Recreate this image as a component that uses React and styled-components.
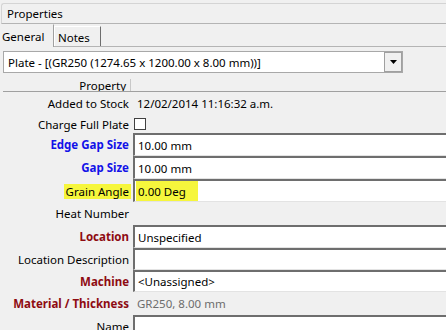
import React from "react";
import styled, { createGlobalStyle } from "styled-components";

const Global = createGlobalStyle`
  html, body { margin: 0; padding: 0; background: #f0f0f0; }
  body { font-family: "Noto Sans", "Liberation Sans", sans-serif; font-size: 11.5px; color: #000; }
`;

const Panel = styled.div`
  width: 446px;
  height: 330px;
  overflow: hidden;
  background: #f0f0f0;
  display: flex;
  flex-direction: column;
  & > * { flex-shrink: 0; }
`;

const TitleBar = styled.div`
  height: 21px;
  margin: 3px 0 0 1px;
  border: 1px solid #d4d4d4;
  border-right: none;
  border-bottom-color: #b4b4b4;
  border-radius: 3px 0 0 0;
  display: flex;
  align-items: center;
  padding-left: 5px;
  box-sizing: border-box;
`;

const TabStrip = styled.div`
  height: 23px;
  display: flex;
  align-items: flex-end;
  border-bottom: 1px solid #b4b4b4;
  box-sizing: border-box;
`;

const Tab = styled.div`
  height: ${(p) => (p.$active ? 23 : 20)}px;
  width: ${(p) => p.$w}px;
  box-sizing: border-box;
  display: flex;
  align-items: center;
  padding-left: ${(p) => (p.$active ? 1 : 3)}px;
  padding-top: ${(p) => (p.$active ? 0 : 1)}px;
  background: #f0f0f0;
  border-left: 1px solid ${(p) => (p.$active ? "transparent" : "#ffffff")};
  border-right: 1px solid ${(p) => (p.$active ? "#a0a0a0" : "#6d6d6d")};
  border-top: 1px solid ${(p) => (p.$active ? "transparent" : "#ffffff")};
  margin-bottom: ${(p) => (p.$active ? -1 : 0)}px;
`;

const ComboWrap = styled.div`
  padding: 4px 0 0 3px;
  height: 29px;
  box-sizing: border-box;
`;

const Combo = styled.div`
  width: 400px;
  height: 22px;
  box-sizing: border-box;
  border: 1px solid #a8a8a8;
  background: #fff;
  display: flex;
  align-items: center;
  padding-left: 4px;
`;

const ComboText = styled.span`
  flex: 1;
  white-space: nowrap;
`;

const ComboButton = styled.div`
  width: 18px;
  height: 20px;
  box-sizing: border-box;
  border: 1px solid #a0a0a0;
  background: #f0f0f0;
  display: flex;
  align-items: center;
  justify-content: center;
`;

const Grid = styled.div`
  margin-left: 3px;
  display: flex;
  flex-direction: column;
  & > * { flex-shrink: 0; }
`;

const HeaderRow = styled.div`
  height: 15px;
  display: grid;
  grid-template-columns: 128px 1fr;
  border-bottom: 1px solid #a0a0a0;
  overflow: hidden;
`;

const HeaderCell = styled.div`
  border-right: 1px solid #c8c8c8;
  text-align: right;
  padding-right: 4px;
  margin-top: 3px;
  line-height: 13px;
  white-space: nowrap;
`;

const Row = styled.div`
  height: ${(p) => p.$h}px;
  display: grid;
  grid-template-columns: 128px 1fr;
  align-items: center;
`;

const Label = styled.div`
  text-align: right;
  padding-right: 2px;
  white-space: nowrap;
  font-weight: ${(p) => (p.$tone === "blue" || p.$tone === "red" ? 700 : 400)};
  color: ${(p) =>
    p.$tone === "blue" ? "#1212e8" : p.$tone === "red" ? "#8e0b12" : "#000"};
  justify-self: end;
  background: ${(p) => (p.$hi ? "#f6f63c" : "transparent")};
  padding-left: ${(p) => (p.$hi ? 2 : 0)}px;
  line-height: 15px;
  margin-top: ${(p) => (p.$hi ? 2 : 0)}px;
`;

const Value = styled.div`
  padding-left: 6px;
  white-space: nowrap;
  color: ${(p) => (p.$muted ? "#6d6d6d" : "#000")};
`;

const Input = styled.div`
  height: 100%;
  margin-left: 2px;
  box-sizing: border-box;
  background: #fff;
  border-top: 2px solid #6e6e6e;
  border-left: 2px solid #6e6e6e;
  border-bottom: 1px solid #e3e3e3;
  display: flex;
  align-items: stretch;
  padding-left: 1px;
  white-space: nowrap;
`;

const InputText = styled.span`
  display: flex;
  align-items: center;
  padding-left: 2px;
  padding-right: ${(p) => (p.$hi ? 12 : 0)}px;
  background: ${(p) => (p.$hi ? "#f6f63c" : "transparent")};
`;

const Check = styled.div`
  margin-left: 3px;
  width: 12px;
  height: 12px;
  box-sizing: border-box;
  border: 1px solid #404040;
  background: #fff;
`;

export default function App() {
  return (
    <Panel>
      <Global />
      <TitleBar>Properties</TitleBar>
      <TabStrip>
        <Tab $active $w={54}>General</Tab>
        <Tab $w={47}>Notes</Tab>
      </TabStrip>
      <ComboWrap>
        <Combo>
          <ComboText>Plate - [(GR250 (1274.65 x 1200.00 x 8.00 mm))]</ComboText>
          <ComboButton>
            <svg width="7" height="4" viewBox="0 0 7 4">
              <path d="M0 0H7L3.5 4Z" fill="#000" />
            </svg>
          </ComboButton>
        </Combo>
      </ComboWrap>
      <Grid>
        <HeaderRow>
          <HeaderCell>Property</HeaderCell>
          <div />
        </HeaderRow>
        <Row $h={23}>
          <Label>Added to Stock</Label>
          <Value>12/02/2014 11:16:32 a.m.</Value>
        </Row>
        <Row $h={18}>
          <Label>Charge Full Plate</Label>
          <Check />
        </Row>
        <Row $h={23}>
          <Label $tone="blue">Edge Gap Size</Label>
          <Input><InputText>10.00 mm</InputText></Input>
        </Row>
        <Row $h={23}>
          <Label $tone="blue">Gap Size</Label>
          <Input><InputText>10.00 mm</InputText></Input>
        </Row>
        <Row $h={23}>
          <Label $hi>Grain Angle</Label>
          <Input><InputText $hi>0.00 Deg</InputText></Input>
        </Row>
        <Row $h={23}>
          <Label>Heat Number</Label>
          <div />
        </Row>
        <Row $h={23}>
          <Label $tone="red">Location</Label>
          <Input><InputText>Unspecified</InputText></Input>
        </Row>
        <Row $h={22}>
          <Label>Location Description</Label>
          <Input />
        </Row>
        <Row $h={22}>
          <Label $tone="red">Machine</Label>
          <Input><InputText>&lt;Unassigned&gt;</InputText></Input>
        </Row>
        <Row $h={23}>
          <Label $tone="red">Material / Thickness</Label>
          <Value $muted>GR250, 8.00 mm</Value>
        </Row>
        <Row $h={23}>
          <Label>Name</Label>
          <Input />
        </Row>
      </Grid>
    </Panel>
  );
}
